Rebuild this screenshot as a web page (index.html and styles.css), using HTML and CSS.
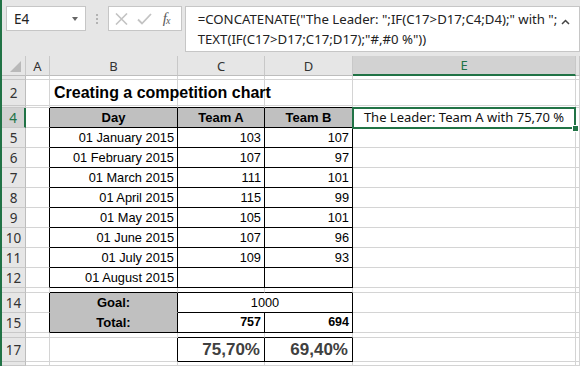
FILE: index.html
```html
<!DOCTYPE html>
<html>
<head>
<meta charset="utf-8">
<link rel="stylesheet" href="styles.css">
</head>
<body>
<div class="app">
  <div class="fbar">
    <div class="namebox"><span>E4</span><span class="dd"></span></div>
    <div class="grip"><i></i><i></i><i></i></div>
    <div class="fbtns">
      <svg width="13" height="12" viewBox="0 0 13 12"><path d="M1 0.5 L12 11.5 M12 0.5 L1 11.5" stroke="#c3c3c3" stroke-width="1.6" fill="none"/></svg>
      <svg width="15" height="12" viewBox="0 0 15 12"><path d="M1 6.5 L5 10.5 L14 1" stroke="#c3c3c3" stroke-width="1.8" fill="none"/></svg>
      <span class="fx">f<sub>x</sub></span>
    </div>
    <div class="formula">
      <div class="ftext">=CONCATENATE("The Leader: ";IF(C17&gt;D17;C4;D4);" with ";<br>TEXT(IF(C17&gt;D17;C17;D17);"#,#0 %"))</div>
      <svg class="caret" width="9" height="6" viewBox="0 0 9 6"><path d="M1 5 L4.5 1.5 L8 5" stroke="#444" stroke-width="1.5" fill="none"/></svg>
    </div>
  </div>
  <div class="sheet">
    <!-- header row -->
    <div class="h corner"><span class="tri"></span></div>
    <div class="h">A</div><div class="h">B</div><div class="h">C</div><div class="h">D</div><div class="h sel-col">E</div><div class="h"></div>
    <!-- row 1 hidden -->
    <div class="rh"></div><div class="c"></div><div class="c"></div><div class="c"></div><div class="c"></div><div class="c"></div><div class="c"></div>
    <!-- row 2 -->
    <div class="rh">2</div><div class="c"></div><div class="c title">Creating a competition chart</div><div class="c"></div><div class="c"></div><div class="c"></div><div class="c"></div>
    <!-- row 3 hidden -->
    <div class="rh"></div><div class="c"></div><div class="c kb"></div><div class="c kb"></div><div class="c kb"></div><div class="c"></div><div class="c"></div>
    <!-- row 4 -->
    <div class="rh sel-row">4</div><div class="c kr"></div><div class="c hd kb kr">Day</div><div class="c hd kb kr">Team A</div><div class="c hd kb kr">Team B</div><div class="c e4"><span class="leader">The Leader: Team A with 75,70 %</span><span class="selbox"></span><span class="handle"></span></div><div class="c"></div>
    <!-- rows 5-12 -->
    <div class="rh">5</div><div class="c kr"></div><div class="c n kb kr">01 January 2015</div><div class="c n kb kr">103</div><div class="c n kb kr">107</div><div class="c"></div><div class="c"></div>
    <div class="rh">6</div><div class="c kr"></div><div class="c n kb kr">01 February 2015</div><div class="c n kb kr">107</div><div class="c n kb kr">97</div><div class="c"></div><div class="c"></div>
    <div class="rh">7</div><div class="c kr"></div><div class="c n kb kr">01 March 2015</div><div class="c n kb kr">111</div><div class="c n kb kr">101</div><div class="c"></div><div class="c"></div>
    <div class="rh">8</div><div class="c kr"></div><div class="c n kb kr">01 April 2015</div><div class="c n kb kr">115</div><div class="c n kb kr">99</div><div class="c"></div><div class="c"></div>
    <div class="rh">9</div><div class="c kr"></div><div class="c n kb kr">01 May 2015</div><div class="c n kb kr">105</div><div class="c n kb kr">101</div><div class="c"></div><div class="c"></div>
    <div class="rh">10</div><div class="c kr"></div><div class="c n kb kr">01 June 2015</div><div class="c n kb kr">107</div><div class="c n kb kr">96</div><div class="c"></div><div class="c"></div>
    <div class="rh">11</div><div class="c kr"></div><div class="c n kb kr">01 July 2015</div><div class="c n kb kr">109</div><div class="c n kb kr">93</div><div class="c"></div><div class="c"></div>
    <div class="rh">12</div><div class="c kr"></div><div class="c n kb kr">01 August 2015</div><div class="c n kb kr"></div><div class="c n kb kr"></div><div class="c"></div><div class="c"></div>
    <!-- row 13 hidden -->
    <div class="rh"></div><div class="c"></div><div class="c kb"></div><div class="c kb"></div><div class="c kb"></div><div class="c"></div><div class="c"></div>
    <!-- row 14 -->
    <div class="rh">14</div><div class="c kr"></div><div class="c hd sb kr">Goal:</div><div class="c mid kb kr span2">1000</div><div class="c"></div><div class="c"></div>
    <!-- row 15 -->
    <div class="rh">15</div><div class="c kr"></div><div class="c hd kb kr">Total:</div><div class="c n b kb kr">757</div><div class="c n b kb kr">694</div><div class="c"></div><div class="c"></div>
    <!-- row 16 hidden -->
    <div class="rh"></div><div class="c"></div><div class="c"></div><div class="c kb"></div><div class="c kb"></div><div class="c"></div><div class="c"></div>
    <!-- row 17 -->
    <div class="rh">17</div><div class="c"></div><div class="c kr"></div><div class="c n big kb kr">75,70%</div><div class="c n big kb kr">69,40%</div><div class="c"></div><div class="c"></div>
    <!-- row 18 -->
    <div class="rh"></div><div class="c"></div><div class="c"></div><div class="c"></div><div class="c"></div><div class="c"></div><div class="c"></div>
  </div>
</div>
</body>
</html>
```

FILE: styles.css
```css
* { box-sizing: border-box; }
html, body { margin: 0; padding: 0; }
body { width: 580px; height: 366px; overflow: hidden; background: #e6e6e6; font-family: "Noto Sans", "Open Sans", sans-serif; }

.app { border-left: 2px solid #217346; height: 366px; display: flex; flex-direction: column; }

.fbar { height: 56px; display: flex; align-items: flex-start; padding: 6px 0 0 4px; background: #e6e6e6; flex: none; }
.namebox { width: 80px; height: 25px; background: #fff; border: 1px solid #c6c6c6; display: flex; align-items: center; justify-content: space-between; padding: 0 7px 0 7px; font-size: 13.5px; color: #222; }
.dd { width: 0; height: 0; border-left: 3.5px solid transparent; border-right: 3.5px solid transparent; border-top: 4px solid #666; margin-top: 1px; }
.grip { width: 22px; height: 25px; display: flex; flex-direction: column; align-items: center; justify-content: center; gap: 2px; }
.grip i { display: block; width: 2px; height: 2px; background: #b3b3b3; }
.fbtns { width: 74px; height: 25px; background: #fff; border: 1px solid #c6c6c6; display: flex; align-items: center; padding-left: 6px; gap: 9px; }
.fx { font-family: "Liberation Serif", serif; font-style: italic; font-size: 15px; color: #5a5a5a; margin-left: 2px; line-height: 1; }
.fx sub { font-size: 10px; vertical-align: -1px; margin-left: -1px; }
.formula { margin-left: 3px; width: 396px; height: 46px; background: #fff; border: 1px solid #c6c6c6; display: flex; justify-content: space-between; padding: 2px 0 0 12px; }
.ftext { font-size: 13.2px; line-height: 20px; color: #222; white-space: nowrap; }
.caret { margin: 10px 9px 0 0; }

.sheet { flex: 1; display: grid; grid-template-columns: 24px 24px 128px 87px 88px 223px 1fr; grid-template-rows: 20px 4px 26px 2px repeat(9, 20px) 5px 20px 20px 5px 24px 1fr; background: #fff; }

.h { background: #e6e6e6; border-right: 1px solid #c8c8c8; border-bottom: 1px solid #bdbdbd; font-size: 13px; color: #333; display: flex; align-items: center; justify-content: center; }
.corner { position: relative; }
.tri { width: 0; height: 0; border-left: 11px solid transparent; border-bottom: 11px solid #b9b9b9; margin: 2px 0 0 4px; }
.sel-col { background: #d2d2d2; border-bottom: 2px solid #217346; color: #217346; }
.rh { background: #e6e6e6; border-right: 1px solid #bdbdbd; border-bottom: 1px solid #c8c8c8; font-size: 13.5px; color: #333; display: flex; align-items: center; justify-content: center; }
.sel-row { background: #d2d2d2; border-right: 2px solid #217346; color: #217346; }

.c { border-right: 1px solid #d4d4d4; border-bottom: 1px solid #d4d4d4; font-family: "Liberation Sans", Arial, sans-serif; font-size: 12.8px; color: #000; line-height: 19px; white-space: nowrap; }
.kb { border-bottom-color: #000; }
.kr { border-right-color: #000; }
.title { font-size: 16px; font-weight: bold; line-height: 25px; padding-left: 4px; overflow: visible; position: relative; z-index: 1; }
.hd { background: #c0c0c0; font-weight: bold; font-size: 13px; text-align: center; }
.sb { border-bottom-color: #c0c0c0; }
.n { text-align: right; padding-right: 3px; }
.b { font-weight: bold; font-size: 12.5px; }
.mid { text-align: center; }
.span2 { grid-column: span 2; }
.big { font-size: 17px; font-weight: bold; color: #404040; line-height: 23px; padding-right: 4px; }

.e4 { position: relative; text-align: center; }
.leader { font-family: "Noto Sans", "Open Sans", sans-serif; font-size: 13px; line-height: 19px; color: #111; }
.selbox { position: absolute; left: -1px; top: -1px; right: -1px; bottom: -2px; border: 2px solid #217346; }
.handle { position: absolute; right: -4px; bottom: -5px; width: 7px; height: 7px; background: #217346; border: 1px solid #fff; }
```
